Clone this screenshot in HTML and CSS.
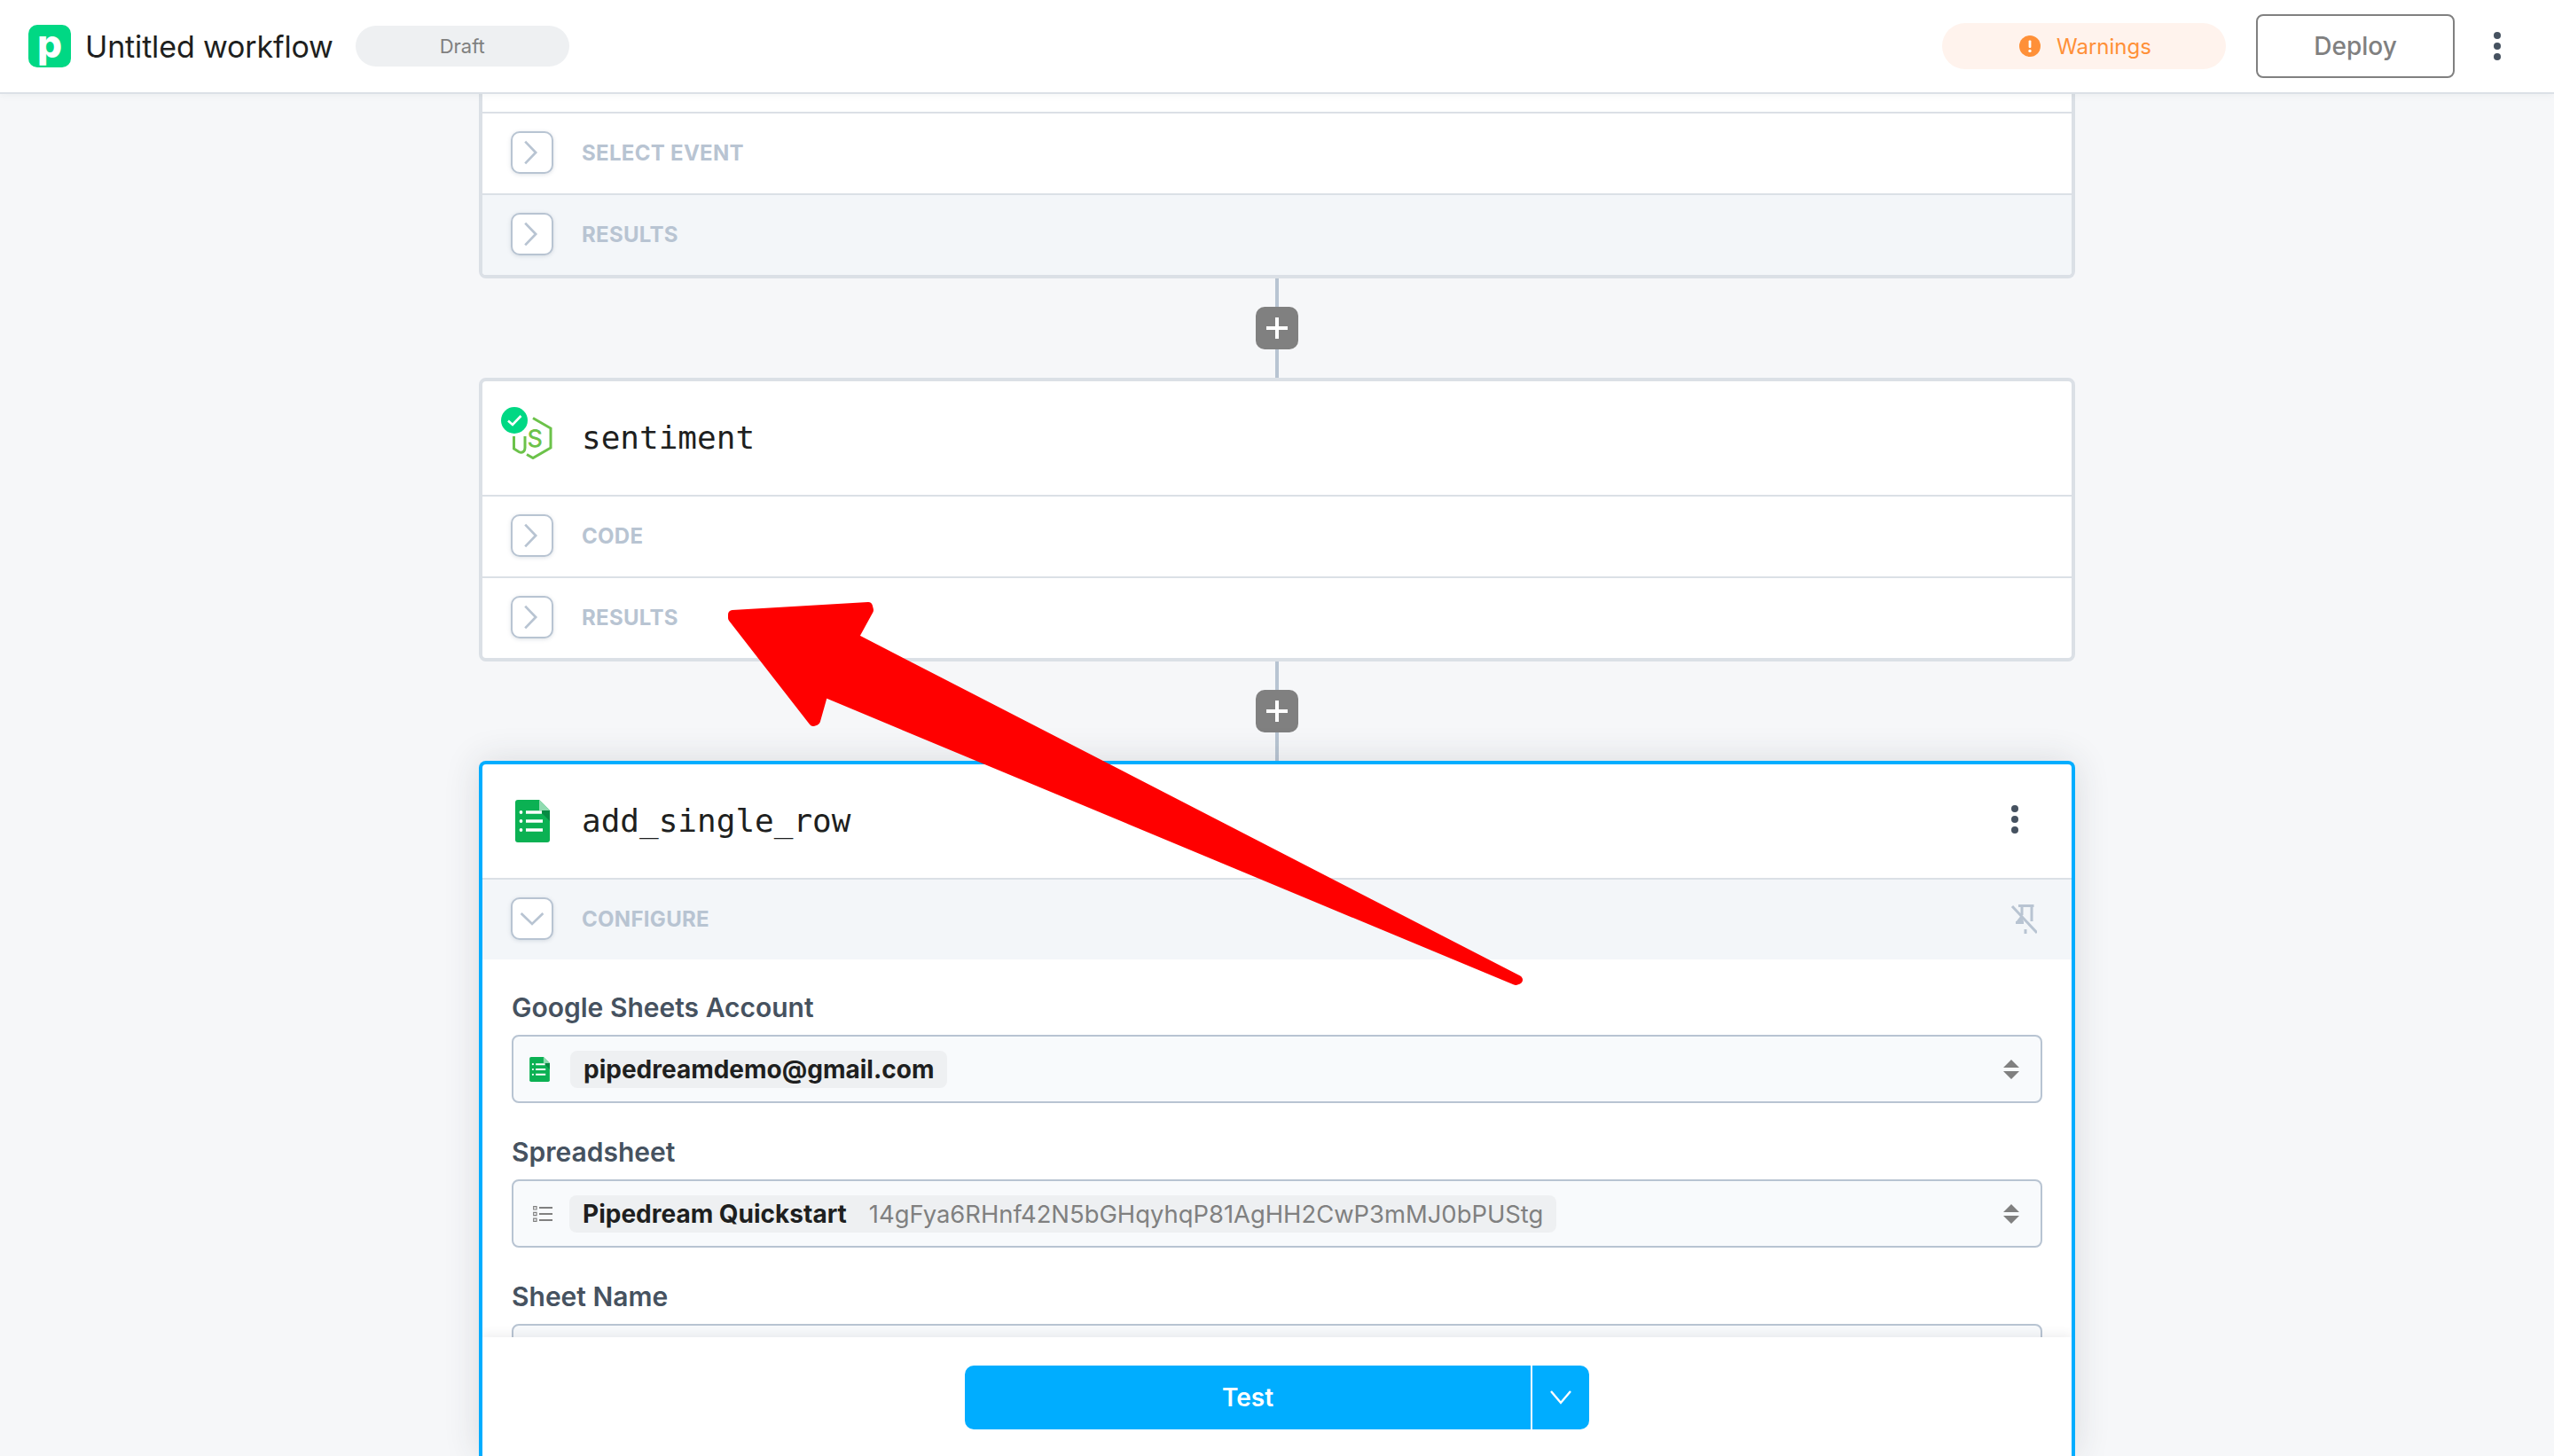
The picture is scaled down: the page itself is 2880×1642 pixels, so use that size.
FILE: index.html
```html
<!DOCTYPE html>
<html lang="en">
<head>
<meta charset="utf-8">
<title>Untitled workflow</title>
<link rel="stylesheet" href="styles.css">
</head>
<body>
<svg class="sprite" aria-hidden="true">
  <symbol id="chev-right" viewBox="0 0 48 48"><path d="M15.5 10.5 L28.5 24 L15.5 37.5" fill="none" stroke="#b8c4d2" stroke-width="3"/></symbol>
  <symbol id="chev-down" viewBox="0 0 48 48"><path d="M10.5 17.5 L24 30.5 L37.5 17.5" fill="none" stroke="#b8c4d2" stroke-width="3"/></symbol>
  <symbol id="sheet" viewBox="0 0 39 48">
    <path d="M3 0 H27 L39 12 V45 a3 3 0 0 1 -3 3 H3 a3 3 0 0 1 -3 -3 V3 a3 3 0 0 1 3 -3 Z" fill="#0bb153"/>
    <path d="M27 12 L39 24 V12 Z" fill="#078a43"/>
    <path d="M27 0 L39 12 H27 Z" fill="#8fdbb0"/>
    <path d="M12 14 H30 M12 24 H31 M12 34 H31" stroke="#fff" stroke-width="3.4" fill="none"/>
    <circle cx="6.5" cy="14" r="1.9" fill="#fff"/><circle cx="6.5" cy="24" r="1.9" fill="#fff"/><circle cx="6.5" cy="34" r="1.9" fill="#fff"/>
  </symbol>
  <symbol id="sort" viewBox="0 0 18 22"><path d="M9 0 L18 9 H0 Z M0 13 H18 L9 22 Z" fill="#808080"/></symbol>
  <symbol id="kebab" viewBox="0 0 8 32"><circle cx="4" cy="4" r="4" fill="#465260"/><circle cx="4" cy="16" r="4" fill="#465260"/><circle cx="4" cy="28" r="4" fill="#465260"/></symbol>
</svg>

<header class="topbar">
  <div class="brand">
    <span class="logo">p</span>
    <span class="wf-title">Untitled workflow</span>
    <span class="status-pill">Draft</span>
  </div>
  <div class="top-actions">
    <div class="warn-pill">
      <svg class="warn-icon" viewBox="0 0 24 24"><circle cx="12" cy="12" r="12" fill="#ff9038"/><rect x="10.6" y="5.5" width="2.8" height="8.5" rx="1" fill="#fff"/><circle cx="12" cy="17.4" r="1.7" fill="#fff"/></svg>
      <span>Warnings</span>
    </div>
    <button class="deploy">Deploy</button>
    <svg class="kebab"><use href="#kebab"/></svg>
  </div>
</header>

<main class="canvas">
  <section class="card card-clipped">
    <div class="stub"></div>
    <div class="row">
      <span class="toggle"><svg><use href="#chev-right"/></svg></span>
      <span class="row-label">SELECT EVENT</span>
    </div>
    <div class="row row-tint">
      <span class="toggle"><svg><use href="#chev-right"/></svg></span>
      <span class="row-label">RESULTS</span>
    </div>
  </section>

  <div class="connector"><i></i><span class="add"><svg viewBox="0 0 24 24"><path d="M12 0 V24 M0 12 H24" stroke="#fff" stroke-width="4"/></svg></span><i></i></div>

  <section class="card">
    <div class="step-head">
      <span class="step-icon">
        <svg class="node-icon" viewBox="0 0 48 48">
          <path d="M25 1.5 L45 13 V35 L25 46.5 L18 42.5" fill="none" stroke="#6cc24a" stroke-width="3"/>
          <path d="M3.5 22 V36 L9 39.5 C13 41.5 16 39 16 35 V22" fill="none" stroke="#6cc24a" stroke-width="3"/>
          <text class="node-s" x="18.5" y="33.5">S</text>
        </svg>
        <svg class="check-badge" viewBox="0 0 30 30"><circle cx="15" cy="15" r="15" fill="#00d884"/><path d="M8 15.5 L13 20 L22.5 10" fill="none" stroke="#fff" stroke-width="2.6"/></svg>
      </span>
      <span class="step-name">sentiment</span>
    </div>
    <div class="row">
      <span class="toggle"><svg><use href="#chev-right"/></svg></span>
      <span class="row-label">CODE</span>
    </div>
    <div class="row">
      <span class="toggle"><svg><use href="#chev-right"/></svg></span>
      <span class="row-label">RESULTS</span>
    </div>
  </section>

  <div class="connector"><i></i><span class="add"><svg viewBox="0 0 24 24"><path d="M12 0 V24 M0 12 H24" stroke="#fff" stroke-width="4"/></svg></span><i></i></div>

  <section class="card card-active">
    <div class="step-head">
      <span class="step-icon"><svg class="sheet-big"><use href="#sheet"/></svg></span>
      <span class="step-name">add_single_row</span>
      <svg class="kebab kebab-step"><use href="#kebab"/></svg>
    </div>
    <div class="row row-tint">
      <span class="toggle"><svg><use href="#chev-down"/></svg></span>
      <span class="row-label">CONFIGURE</span>
      <svg class="pin-off" viewBox="0 0 30 36">
        <path d="M9 3.5 H26.5 M13 4 V14 M24 3 V21 M6 22.5 H15 M17 30 V35 M2 4 L30 34" fill="none" stroke="#b8c4d2" stroke-width="3"/>
        <path d="M13 13 L6 22 H15 Z" fill="#b8c4d2"/>
      </svg>
    </div>
    <div class="form">
      <div class="field">
        <label class="field-label">Google Sheets Account</label>
        <div class="select">
          <svg class="sheet-small"><use href="#sheet"/></svg>
          <span class="chip"><b>pipedreamdemo@gmail.com</b></span>
          <svg class="sort"><use href="#sort"/></svg>
        </div>
      </div>
      <div class="field">
        <label class="field-label">Spreadsheet</label>
        <div class="select">
          <svg class="list-icon" viewBox="0 0 22 18">
            <path d="M7 2 H22 M7 9 H22 M7 16 H22" stroke="#808080" stroke-width="2.2" fill="none"/>
            <path d="M.7.7 H4 V4 H.7 Z M.7 7.4 H4 V10.7 H.7 Z M.7 14.2 H4 V17.4 H.7 Z" stroke="#808080" stroke-width="1.2" fill="none"/>
          </svg>
          <span class="chip"><b>Pipedream Quickstart</b><span class="chip-id">14gFya6RHnf42N5bGHqyhqP81AgHH2CwP3mMJ0bPUStg</span></span>
          <svg class="sort"><use href="#sort"/></svg>
        </div>
      </div>
      <div class="field">
        <label class="field-label">Sheet Name</label>
        <div class="select"></div>
      </div>
    </div>
    <div class="test-bar">
      <div class="test-btn">
        <span class="test-main">Test</span>
        <span class="test-caret"><svg viewBox="0 0 24 24"><path d="M1 5 L12 18 L23 5" fill="none" stroke="#fff" stroke-width="2.4"/></svg></span>
      </div>
    </div>
  </section>
</main>

<svg class="arrow" viewBox="0 0 2880 1642" aria-hidden="true">
  <path d="M826 693 L979 684 L980 688 L963 719 L1712 1105 L1709 1106 L929 781 L920 813 L917 814 L826 697 Z" fill="#ff0000" stroke="#ff0000" stroke-width="10" stroke-linejoin="round"/>
</svg>
</body>
</html>
```
FILE: styles.css
```css
* { box-sizing: border-box; }
html, body { margin: 0; height: 100%; }
body {
  display: flex;
  flex-direction: column;
  height: 1642px;
  overflow: hidden;
  background: #f6f7f9;
  font-family: Inter, "Liberation Sans", sans-serif;
  position: relative;
}
.sprite { display: none; }

.topbar {
  height: 106px;
  flex: none;
  display: flex;
  align-items: center;
  justify-content: space-between;
  padding: 0 60px 0 32px;
  background: #fff;
  border-bottom: 2px solid #dbe0e6;
  box-shadow: 0 2px 8px rgba(60, 70, 80, 0.05);
  position: relative;
  z-index: 2;
}
.brand { display: flex; align-items: center; }
.logo {
  width: 48px;
  height: 48px;
  border-radius: 10px;
  background: #00d884;
  color: #fff;
  font-size: 44px;
  font-weight: 800;
  line-height: 42px;
  text-align: center;
}
.wf-title { margin-left: 16px; font-size: 34px; color: #1e1f20; letter-spacing: -0.15px; }
.status-pill {
  margin-left: 25px;
  width: 241px;
  height: 46px;
  border-radius: 23px;
  background: #eef0f2;
  color: #808080;
  font-size: 22px;
  line-height: 46px;
  text-align: center;
}
.top-actions { display: flex; align-items: center; }
.warn-pill {
  width: 320px;
  height: 52px;
  border-radius: 26px;
  background: #fff3ed;
  color: #ff9038;
  font-size: 24px;
  display: flex;
  align-items: center;
  padding-left: 87px;
  gap: 18px;
}
.warn-icon { width: 24px; height: 24px; }
.deploy {
  margin-left: 34px;
  width: 224px;
  height: 72px;
  border: 2px solid #808080;
  border-radius: 8px;
  background: #fff;
  color: #808080;
  font: 500 28px Inter, "Liberation Sans", sans-serif;
}
.kebab { width: 8px; height: 32px; }
.top-actions .kebab { margin-left: 44px; }

.canvas {
  flex: 1;
  min-height: 0;
  display: flex;
  flex-direction: column;
  width: 1800px;
  margin: 0 auto;
}
.card {
  flex: none;
  background: #fff;
  border: 4px solid #dbe0e6;
  border-radius: 8px;
  overflow: hidden;
}
.card-clipped { border-top: 0; border-radius: 0 0 8px 8px; }
.card-active {
  flex: 1;
  min-height: 0;
  display: flex;
  flex-direction: column;
  border-color: #00adff;
  border-bottom: 0;
  border-radius: 8px 8px 0 0;
  box-shadow: 0 0 40px rgba(40, 50, 60, 0.14);
}
.stub { height: 20px; }
.row {
  height: 92px;
  flex: none;
  border-top: 2px solid #dbe0e6;
  display: flex;
  align-items: center;
  gap: 32px;
  padding: 0 32px 2px;
}
.row-tint { background: #f3f6f9; }
.toggle {
  width: 48px;
  height: 48px;
  flex: none;
  background: #fff;
  border: 2px solid #b8c4d2;
  border-radius: 10px;
  box-shadow: 0 1px 4px rgba(120, 135, 155, 0.25);
  display: flex;
  align-items: center;
  justify-content: center;
}
.toggle svg { width: 44px; height: 44px; }
.row-label {
  color: #b8c4d2;
  font-size: 24px;
  font-weight: 700;
  letter-spacing: 0.3px;
}
.pin-off { width: 30px; height: 36px; margin-left: auto; margin-right: 7px; }

.connector {
  height: 112px;
  flex: none;
  display: flex;
  flex-direction: column;
  align-items: center;
}
.connector i { flex: 1; width: 4px; background: #b8c4d2; }
.add {
  width: 48px;
  height: 48px;
  border-radius: 10px;
  background: #808080;
  display: flex;
  align-items: center;
  justify-content: center;
}
.add svg { width: 24px; height: 24px; }

.step-head {
  height: 128px;
  flex: none;
  display: flex;
  align-items: center;
  gap: 32px;
  padding: 0 32px;
}
.step-icon {
  width: 48px;
  height: 48px;
  flex: none;
  position: relative;
  display: flex;
  justify-content: center;
}
.node-icon { width: 48px; height: 48px; }
.node-s { font-size: 27px; font-weight: 500; fill: #6cc24a; }
.check-badge { position: absolute; left: -11px; top: -11px; width: 30px; height: 30px; }
.sheet-big { width: 39px; height: 48px; }
.step-name {
  font-family: "DejaVu Sans Mono", "Liberation Mono", monospace;
  font-size: 36px;
  color: #1e1f20;
  margin-bottom: 2px;
}
.kebab-step { margin-left: auto; margin-right: 28px; margin-bottom: 4px; }

.form { flex: 1; min-height: 0; overflow: hidden; padding: 37px 33px 0; }
.field { margin-bottom: 38px; }
.field-label {
  display: block;
  height: 36px;
  margin-bottom: 12px;
  color: #465260;
  font-size: 30px;
  font-weight: 600;
  line-height: 34px;
}
.select {
  height: 77px;
  border: 2px solid #b8c4d2;
  border-radius: 8px;
  background: #f8fafc;
  display: flex;
  align-items: center;
}
.sheet-small { width: 23px; height: 28px; margin-left: 18px; margin-right: 23px; flex: none; }
.list-icon { width: 22px; height: 18px; margin-left: 22px; margin-right: 19px; flex: none; }
.chip {
  height: 42px;
  border-radius: 8px;
  background: #eef0f2;
  padding: 0 15px;
  display: flex;
  align-items: center;
  gap: 25px;
  font-size: 28px;
  color: #1e1f20;
}
.chip b { font-weight: 700; }
.chip-id { font-size: 27.4px; color: #808080; }
.sort { width: 18px; height: 22px; margin-left: auto; margin-right: 24px; }

.test-bar {
  height: 134px;
  flex: none;
  background: #fff;
  padding-top: 32px;
  display: flex;
  justify-content: center;
  box-shadow: 0 -4px 10px rgba(60, 70, 80, 0.08);
  position: relative;
}
.test-btn {
  width: 704px;
  height: 72px;
  display: flex;
  background: #00adff;
  border-radius: 10px;
  color: #fff;
}
.test-main {
  flex: 1;
  font-size: 28px;
  font-weight: 600;
  line-height: 72px;
  text-align: center;
}
.test-caret {
  width: 66px;
  border-left: 2px solid #fff;
  display: flex;
  align-items: center;
  justify-content: center;
}
.test-caret svg { width: 24px; height: 24px; }

.arrow {
  position: absolute;
  left: 0;
  top: 0;
  width: 2880px;
  height: 1642px;
  z-index: 3;
  pointer-events: none;
}
```
